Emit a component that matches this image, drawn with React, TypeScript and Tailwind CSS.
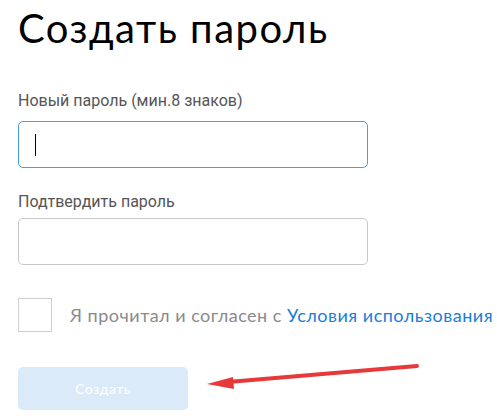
import React from 'react';

const App: React.FC = () => {
  return (
    <div className="relative w-[497px] h-[418px] overflow-hidden bg-white">
      <div className="pl-[18px]">
        {/* Title */}
        <h1 className="pt-[6px] text-[40px] leading-[44px] tracking-[1.5px] text-black font-['Lato',sans-serif] font-normal whitespace-nowrap">
          Создать пароль
        </h1>

        {/* New password */}
        <label className="block mt-[42px] text-[16px] leading-[18px] text-[#555] font-['Roboto',sans-serif]">
          Новый пароль (мин.8 знаков)
        </label>
        <div className="mt-[11px] w-[350px] h-[47px] rounded-[5px] border border-[#4a9de0] flex items-center pl-[16px]">
          <div className="w-px h-[22px] bg-black" />
        </div>

        {/* Confirm */}
        <label className="block mt-[25px] text-[16px] leading-[18px] text-[#555] font-['Roboto',sans-serif]">
          Подтвердить пароль
        </label>
        <div className="mt-[7px] w-[350px] h-[47px] rounded-[5px] border border-[#c8c8c8]" />

        {/* Terms */}
        <div className="mt-[33px] flex items-center whitespace-nowrap">
          <div className="w-[34px] h-[34px] border border-[#cfcfcf] shrink-0" />
          <span className="ml-[18px] text-[18px] tracking-[0.5px] text-[#8a8a8a] font-['Lato',sans-serif]">
            Я прочитал и согласен с{' '}
            <span className="text-[#1a7dd8]">Условия использования</span>
          </span>
        </div>

        {/* Button */}
        <button className="mt-[35px] w-[170px] h-[43px] rounded-[5px] bg-[#dbeaf8] text-white text-[14px] tracking-[0.5px] font-['Lato',sans-serif]">
          Создать
        </button>
      </div>

      {/* Annotation arrow */}
      <svg className="absolute left-0 top-0 pointer-events-none" width="497" height="418">
        <line x1="417" y1="366" x2="228" y2="382" stroke="#e8393a" strokeWidth="4" strokeLinecap="round" />
        <polygon points="207,384 233,377 234,389" fill="#e8393a" />
      </svg>
    </div>
  );
};

export default App;
